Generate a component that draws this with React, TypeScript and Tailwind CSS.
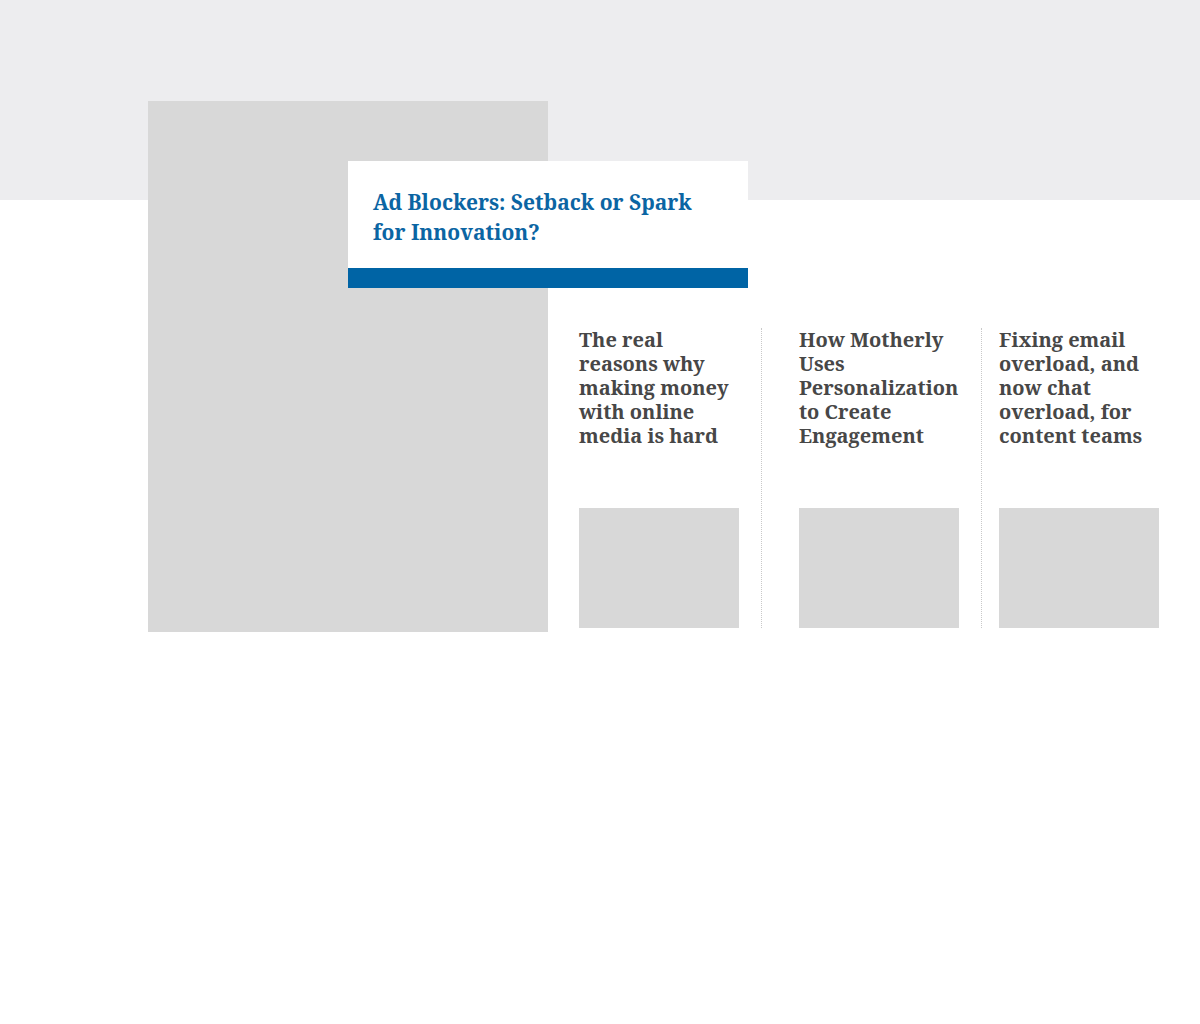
const stories = [
  { title: 'The real reasons why making money with online media is hard', pad: 'pr-[22px] border-r' },
  { title: 'How Motherly Uses Personalization to Create Engagement', pad: 'pl-[37px] pr-[22px] border-r' },
  { title: 'Fixing email overload, and now chat overload, for content teams', pad: 'pl-[17px]' },
]

function StoryCard({ title, pad }: { title: string; pad: string }) {
  return (
    <div className={`flex h-[300px] border-dotted border-[#c9c9c9] ${pad}`}>
      <div className="flex w-[160px] flex-col justify-between">
        <h3 className="font-['Noto_Serif','DejaVu_Serif',serif] text-[20px] font-bold leading-[24px] text-[#474747]">
          {title}
        </h3>
        <div className="h-[120px] w-[160px] bg-[#d8d8d8]" />
      </div>
    </div>
  )
}

export default function App() {
  return (
    <div className="min-h-[1024px] bg-[linear-gradient(#ededef_200px,#ffffff_200px)] pt-[101px]">
      <div className="flex pl-[148px]">
        <div className="relative h-[531px] w-[400px] shrink-0 bg-[#d8d8d8]">
          <div className="absolute left-[200px] top-[60px] w-[400px]">
            <div className="bg-white pb-[21px] pl-[25px] pr-[40px] pt-[26px]">
              <h2 className="font-['Noto_Serif','DejaVu_Serif',serif] text-[21px] font-bold leading-[30px] text-[#0b65a3]">
                Ad Blockers: Setback or Spark for Innovation?
              </h2>
            </div>
            <div className="h-[20px] bg-[#0064a5]" />
          </div>
        </div>
        <div className="ml-[31px] mt-[227px] flex">
          {stories.map((s) => (
            <StoryCard key={s.title} title={s.title} pad={s.pad} />
          ))}
        </div>
      </div>
    </div>
  )
}
